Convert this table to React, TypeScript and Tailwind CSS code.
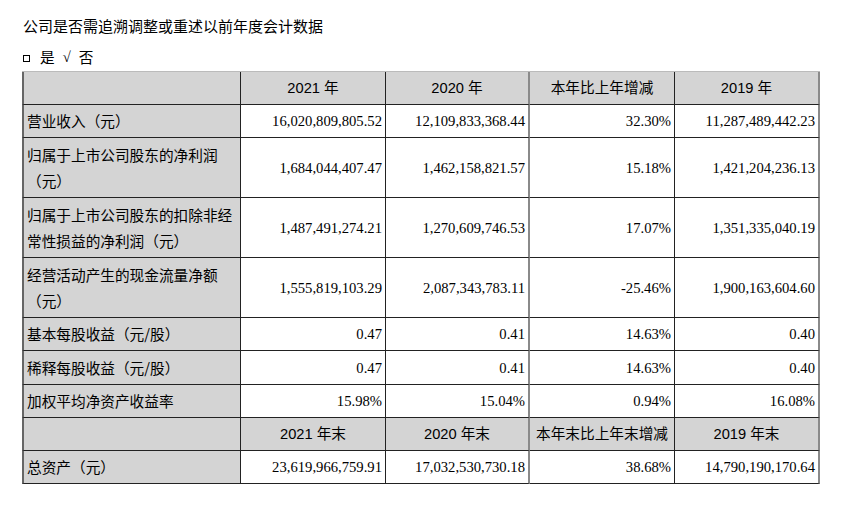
import React from "react";

const sans = { fontFamily: '"Liberation Sans", "Noto Sans CJK SC", sans-serif' };

type Row = { label: string[]; vals: string[]; h: string; header?: boolean };

const rows: Row[] = [
  { label: [""], vals: ["2021 年", "2020 年", "本年比上年增减", "2019 年"], h: "h-[33px]", header: true },
  { label: ["营业收入（元）"], vals: ["16,020,809,805.52", "12,109,833,368.44", "32.30%", "11,287,489,442.23"], h: "h-[33px]" },
  { label: ["归属于上市公司股东的净利润", "（元）"], vals: ["1,684,044,407.47", "1,462,158,821.57", "15.18%", "1,421,204,236.13"], h: "h-[60px]" },
  { label: ["归属于上市公司股东的扣除非经", "常性损益的净利润（元）"], vals: ["1,487,491,274.21", "1,270,609,746.53", "17.07%", "1,351,335,040.19"], h: "h-[60px]" },
  { label: ["经营活动产生的现金流量净额", "（元）"], vals: ["1,555,819,103.29", "2,087,343,783.11", "-25.46%", "1,900,163,604.60"], h: "h-[60px]" },
  { label: ["基本每股收益（元/股）"], vals: ["0.47", "0.41", "14.63%", "0.40"], h: "h-[33px]" },
  { label: ["稀释每股收益（元/股）"], vals: ["0.47", "0.41", "14.63%", "0.40"], h: "h-[34px]" },
  { label: ["加权平均净资产收益率"], vals: ["15.98%", "15.04%", "0.94%", "16.08%"], h: "h-[33px]" },
  { label: [""], vals: ["2021 年末", "2020 年末", "本年末比上年末增减", "2019 年末"], h: "h-[33px]", header: true },
  { label: ["总资产（元）"], vals: ["23,619,966,759.91", "17,032,530,730.18", "38.68%", "14,790,190,170.64"], h: "h-[33px]" },
];

const rightBorders = [
  "border-r border-r-[#222]",
  "border-r-2 border-r-[#8a8a8a]",
  "border-r border-r-[#222]",
  "border-r-2 border-r-[#8a8a8a]",
];

export default function App() {
  return (
    <div className="w-[841px] h-[514px] bg-white text-black text-[14.67px]" style={sans}>
      <div className="pl-[23px] pt-[16px] h-[20px] leading-[20px] box-content text-[15px]" style={{ fontFamily: '"Noto Sans CJK SC", sans-serif' }}>
        公司是否需追溯调整或重述以前年度会计数据
      </div>
      <div className="pl-[23px] pt-[11px] h-[20px] leading-[20px] box-content flex items-center" style={{ fontFamily: '"Noto Sans CJK SC", sans-serif' }}>
        <span className="inline-block w-[7px] h-[7px] border border-black mt-[3px]" />
        <span className="ml-[10px]">是</span>
        <span className="ml-[8px]" style={{ fontFamily: '"Liberation Serif", serif' }}>√</span>
        <span className="ml-[8px]">否</span>
      </div>
      <div className="mt-[4px] ml-[22px] w-[798px] border-t border-t-[#bbb]">
        {rows.map((r, i) => (
          <div key={i} className={`grid grid-cols-[219px_145px_144px_145px_145px] ${r.h}`}>
            <div
              className="bg-[#d4d4d4] border-l-2 border-l-[#666] border-r border-r-[#222] border-b border-b-[#222] flex flex-col justify-center pl-[3px] leading-[26px]"
              style={{ fontFamily: '"Noto Sans CJK SC", sans-serif' }}
            >
              {r.label.map((l, j) => (
                <div key={j} className="whitespace-nowrap">{l}</div>
              ))}
            </div>
            {r.vals.map((v, j) => (
              <div
                key={j}
                className={`${r.header ? "bg-[#d4d4d4] justify-center" : "bg-white justify-end pr-[3px]"} ${rightBorders[j]} border-b border-b-[#222] flex items-center whitespace-nowrap`}
                style={
                  r.header
                    ? { fontFamily: '"Liberation Sans", "Noto Sans CJK SC", sans-serif' }
                    : { fontFamily: '"Liberation Serif", "Noto Sans CJK SC", serif' }
                }
              >
                {v}
              </div>
            ))}
          </div>
        ))}
      </div>
    </div>
  );
}
